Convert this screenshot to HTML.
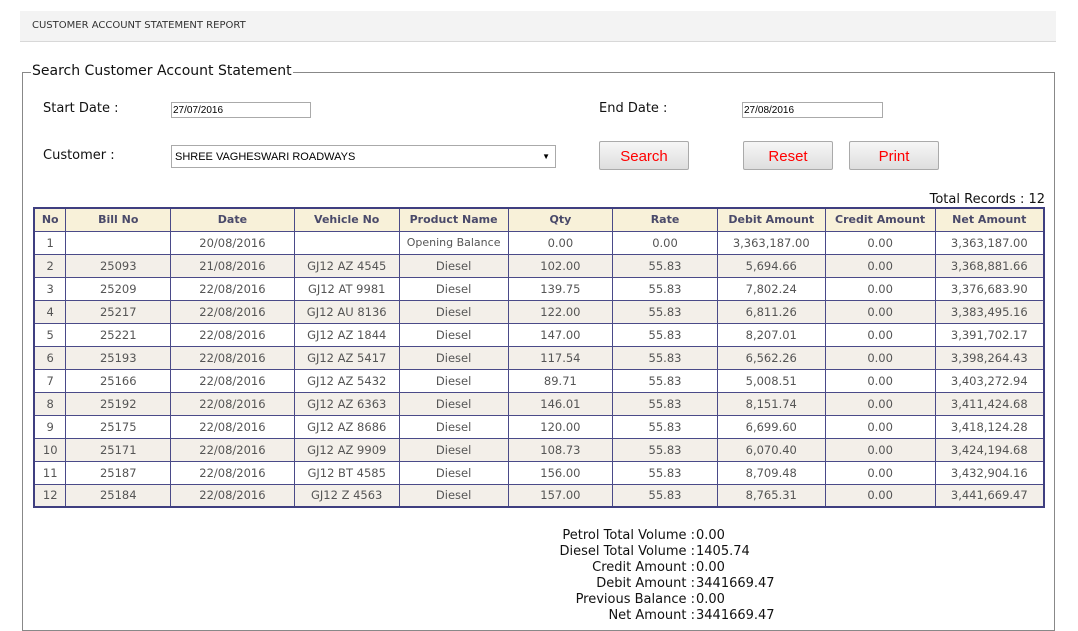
<!DOCTYPE html>
<html><head><meta charset="utf-8"><style>
*{box-sizing:border-box}
body{margin:0;width:1078px;height:631px;background:#fff;font-family:"DejaVu Sans","Liberation Sans",sans-serif;position:relative;overflow:hidden}
.hdr{position:absolute;left:20px;top:11px;width:1036px;height:31px;background:#f3f3f3;border-bottom:1px solid #d8d8d8;font-size:10px;color:#333;padding:9px 0 0 12px}
.fs{position:absolute;left:22px;top:72px;width:1033px;height:559px;border:1px solid #888}
.lg{position:absolute;left:31px;top:63px;background:#fff;font-size:14px;color:#111;padding:0 1px}
.lbl{position:absolute;font-size:13px;color:#111}
.inp{position:absolute;height:16px;border:1px solid #aaa;font-family:"Liberation Sans",sans-serif;font-size:10px;padding:2px 1px;color:#000}
.sel{position:absolute;left:171px;top:145px;width:385px;height:23px;border:1px solid #aaa;font-family:"Liberation Sans",sans-serif;font-size:11px;padding:5px 3px}
.sel span{position:absolute;right:5px;top:6px;font-size:8px}
.btn{position:absolute;top:141px;width:90px;height:29px;border:1px solid #aaa;border-radius:2px;background:linear-gradient(#f6f6f6,#dedede);color:#f00;font-family:"Liberation Sans",sans-serif;font-size:15px;text-align:center;line-height:29px}
table{position:absolute;left:33px;top:207px;width:1012px;border-collapse:collapse;border:2px solid #3f3f80;font-size:11.5px;color:#555}
td,th{border:1px solid #4a4a88;text-align:center;height:23px;padding:0;white-space:nowrap}
th{background:#f8f1d9;color:#4a4a6a;font-weight:bold;height:23px;font-size:11px}
tr.a td{background:#f3efe9}
.sum{position:absolute;left:400px;top:528px;font-size:13px;color:#111;line-height:16px}
.sum div{display:flex}
.sum .k{width:296px;text-align:right;padding-right:1px}
</style></head><body>
<div class="hdr">CUSTOMER ACCOUNT STATEMENT REPORT</div>
<div class="fs"></div>
<div class="lg">Search Customer Account Statement</div>
<div class="lbl" style="left:43px;top:101px">Start Date :</div>
<div class="inp" style="left:171px;top:102px;width:140px">27/07/2016</div>
<div class="lbl" style="left:599px;top:101px">End Date :</div>
<div class="inp" style="left:742px;top:102px;width:141px">27/08/2016</div>
<div class="lbl" style="left:43px;top:148px">Customer :</div>
<div class="sel">SHREE VAGHESWARI ROADWAYS<span>▼</span></div>
<div class="btn" style="left:599px">Search</div>
<div class="btn" style="left:743px">Reset</div>
<div class="btn" style="left:849px">Print</div>
<div class="lbl" style="right:33px;top:192px">Total Records : 12</div>
<table>
<colgroup><col style="width:32px"><col style="width:105px"><col style="width:124px"><col style="width:105px"><col style="width:109px"><col style="width:105px"><col style="width:105px"><col style="width:108px"><col style="width:110px"><col style="width:109px"></colgroup>
<tr><th>No</th><th>Bill No</th><th>Date</th><th>Vehicle No</th><th>Product Name</th><th>Qty</th><th>Rate</th><th>Debit Amount</th><th>Credit Amount</th><th>Net Amount</th></tr>
<tr><td>1</td><td></td><td>20/08/2016</td><td></td><td style="font-size:11px">Opening Balance</td><td>0.00</td><td>0.00</td><td>3,363,187.00</td><td>0.00</td><td>3,363,187.00</td></tr>
<tr class="a"><td>2</td><td>25093</td><td>21/08/2016</td><td>GJ12 AZ 4545</td><td>Diesel</td><td>102.00</td><td>55.83</td><td>5,694.66</td><td>0.00</td><td>3,368,881.66</td></tr>
<tr><td>3</td><td>25209</td><td>22/08/2016</td><td>GJ12 AT 9981</td><td>Diesel</td><td>139.75</td><td>55.83</td><td>7,802.24</td><td>0.00</td><td>3,376,683.90</td></tr>
<tr class="a"><td>4</td><td>25217</td><td>22/08/2016</td><td>GJ12 AU 8136</td><td>Diesel</td><td>122.00</td><td>55.83</td><td>6,811.26</td><td>0.00</td><td>3,383,495.16</td></tr>
<tr><td>5</td><td>25221</td><td>22/08/2016</td><td>GJ12 AZ 1844</td><td>Diesel</td><td>147.00</td><td>55.83</td><td>8,207.01</td><td>0.00</td><td>3,391,702.17</td></tr>
<tr class="a"><td>6</td><td>25193</td><td>22/08/2016</td><td>GJ12 AZ 5417</td><td>Diesel</td><td>117.54</td><td>55.83</td><td>6,562.26</td><td>0.00</td><td>3,398,264.43</td></tr>
<tr><td>7</td><td>25166</td><td>22/08/2016</td><td>GJ12 AZ 5432</td><td>Diesel</td><td>89.71</td><td>55.83</td><td>5,008.51</td><td>0.00</td><td>3,403,272.94</td></tr>
<tr class="a"><td>8</td><td>25192</td><td>22/08/2016</td><td>GJ12 AZ 6363</td><td>Diesel</td><td>146.01</td><td>55.83</td><td>8,151.74</td><td>0.00</td><td>3,411,424.68</td></tr>
<tr><td>9</td><td>25175</td><td>22/08/2016</td><td>GJ12 AZ 8686</td><td>Diesel</td><td>120.00</td><td>55.83</td><td>6,699.60</td><td>0.00</td><td>3,418,124.28</td></tr>
<tr class="a"><td>10</td><td>25171</td><td>22/08/2016</td><td>GJ12 AZ 9909</td><td>Diesel</td><td>108.73</td><td>55.83</td><td>6,070.40</td><td>0.00</td><td>3,424,194.68</td></tr>
<tr><td>11</td><td>25187</td><td>22/08/2016</td><td>GJ12 BT 4585</td><td>Diesel</td><td>156.00</td><td>55.83</td><td>8,709.48</td><td>0.00</td><td>3,432,904.16</td></tr>
<tr class="a"><td>12</td><td>25184</td><td>22/08/2016</td><td>GJ12 Z 4563</td><td>Diesel</td><td>157.00</td><td>55.83</td><td>8,765.31</td><td>0.00</td><td>3,441,669.47</td></tr>
</table>
<div class="sum">
<div><span class="k">Petrol Total Volume :</span><span>0.00</span></div>
<div><span class="k">Diesel Total Volume :</span><span>1405.74</span></div>
<div><span class="k">Credit Amount :</span><span>0.00</span></div>
<div><span class="k">Debit Amount :</span><span>3441669.47</span></div>
<div><span class="k">Previous Balance :</span><span>0.00</span></div>
<div><span class="k">Net Amount :</span><span>3441669.47</span></div>
</div>
</body></html>
